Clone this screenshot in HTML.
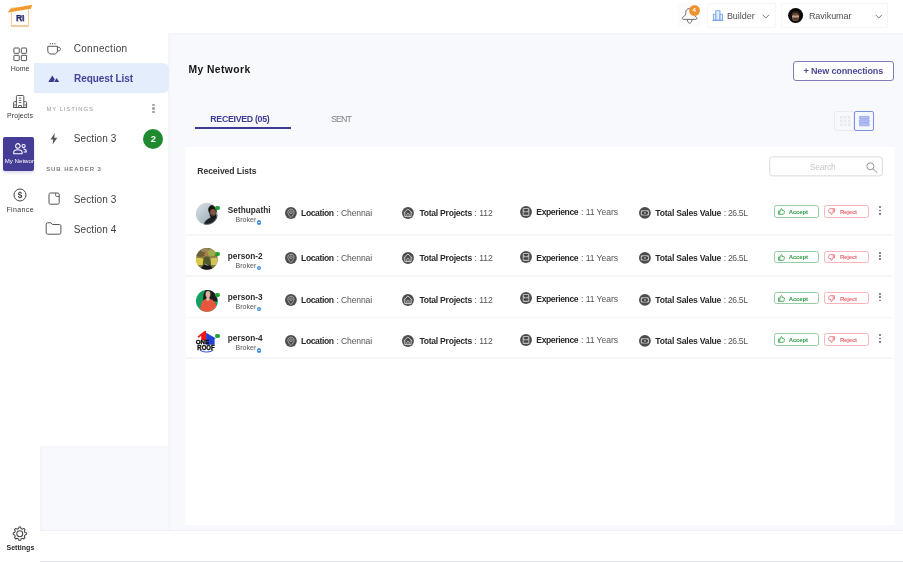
<!DOCTYPE html>
<html><head><meta charset="utf-8">
<style>
*{box-sizing:border-box;margin:0;padding:0}
html,body{width:903px;height:562px;overflow:hidden}
body{position:relative;background:#f8f9fd;font-family:"Liberation Sans",sans-serif;color:#222}
.abs{position:absolute}
svg{position:absolute;overflow:visible}
.t{position:absolute;white-space:nowrap;line-height:1}
#rail{left:0;top:0;width:40px;height:562px;background:#fff}
#top{left:40px;top:0;width:863px;height:33px;background:#fff}
#side{left:40px;top:33px;width:128px;height:413px;background:#fff}
#edge3{left:40px;top:446px;width:3px;height:84px;background:linear-gradient(90deg,#f1f3fa,#f8f9fd)}
#edge4{left:40px;top:446px;width:128px;height:1.500px;background:#f4f5fb}
#edge1{left:168px;top:33px;width:735px;height:1.5px;background:#f3f5fb}
#edge2{left:168px;top:33px;width:3px;height:497px;background:linear-gradient(90deg,#f2f4fa,#f8f9fd)}
#bottom{left:40px;top:530px;width:863px;height:32px;background:#fff;border-top:1px solid #eff1f7;border-bottom:1px solid #e6e8ee}
#card{left:186px;top:147px;width:707.5px;height:377.5px;background:#fff}
.dv{position:absolute;left:186px;width:707px;height:1.500px;background:#f5f6fa}
.dot{position:absolute;width:1.8px;height:1.8px;border-radius:50%}
</style></head><body>
<div id="wrap" style="position:absolute;left:0;top:0;width:903px;height:562px;will-change:transform"><div id="rail" class="abs"></div>
<div id="top" class="abs"></div>
<div id="edge1" class="abs"></div><div id="edge2" class="abs"></div><div id="side" class="abs"></div><div id="edge3" class="abs"></div><div id="edge4" class="abs"></div>
<div id="bottom" class="abs"></div>
<div id="card" class="abs"></div>

<!-- logo -->
<svg style="left:0;top:0" width="40" height="34" viewBox="0 0 40 34">
 <rect x="11.300" y="8" width="17.200" height="18" fill="#fffefb" stroke="#f5bf7c" stroke-width="0.800"/>
 <path d="M11.300 26H28.500" stroke="#e3ad70" stroke-width="0.900"/>
 <polygon points="7.800,12.600 10.400,8.800 32.200,4.800 30.900,8.700" fill="#f29a2e"/>
 <text x="16.800" y="22.200" font-family="Liberation Sans, sans-serif" font-size="9.800" font-weight="bold" fill="#dcdce2" textLength="8.600" lengthAdjust="spacingAndGlyphs">RI</text>
 <text x="15.900" y="21.300" font-family="Liberation Sans, sans-serif" font-size="9.800" font-weight="bold" fill="#25246b" stroke="#25246b" stroke-width="0.250" textLength="8.600" lengthAdjust="spacingAndGlyphs">RI</text>
</svg>
<!-- home -->
<svg style="left:13px;top:47px" width="15" height="15" viewBox="0 0 15 15" fill="none" stroke="#555" stroke-width="1">
 <rect x="0.900" y="1" width="5.300" height="5.300" rx="0.600"/><rect x="8.300" y="1" width="5.300" height="5.300" rx="0.600"/>
 <rect x="0.900" y="8.300" width="5.300" height="5.300" rx="0.600"/><rect x="8.300" y="8.300" width="5.300" height="5.300" rx="0.600"/>
</svg>
<!-- projects -->
<svg style="left:12px;top:94px" width="16" height="15" viewBox="0 0 16 15" fill="none" stroke="#555" stroke-width="1">
 <rect x="4.400" y="1.500" width="7.400" height="12" rx="0.900"/>
 <path d="M4.400 7.600H2.600C2 7.600 1.600 8 1.600 8.600V13.500H4.400M11.800 7.600H13.600C14.200 7.600 14.600 8 14.600 8.600V13.500H11.800M1.200 13.500H15"/>
 <path d="M6.800 4.100H9.400M6.800 6.400H9.400M6.800 8.600H9.400" stroke-width="0.900"/>
 <path d="M6.700 13.500V11.500H9.500V13.500" stroke-width="0.900"/>
 <path d="M3 10V12.200M13.200 10V12.200" stroke-width="0.800"/>
</svg>
<!-- my network -->
<div class="abs" style="left:2.500px;top:136.600px;width:31.500px;height:34.300px;background:#453c96;border-radius:2px;overflow:hidden;box-shadow:0 2px 3px rgba(69,60,150,.18)">
 <svg style="left:10.800px;top:6.400px" width="14" height="12" viewBox="0 0 14 12" fill="none" stroke="#fff" stroke-width="1.050">
  <circle cx="4.900" cy="2.900" r="2.300"/><path d="M0.700 10.800V9.400C0.700 7.600 2.400 6.700 4.900 6.700S9.100 7.600 9.100 9.400V10.800Z" stroke-linejoin="round"/>
  <circle cx="10.600" cy="3" r="1.600"/><path d="M10.400 6C12.200 6 13.200 6.900 13.200 8.200V8.900H10.700"/>
 </svg>
 <div class="t" style="left:2.300px;top:21.900px;font-size:6.100px;color:#fff;letter-spacing:0px">My Network</div>
</div>
<!-- finance -->
<svg style="left:13px;top:188px" width="14" height="14" viewBox="0 0 14 14">
 <circle cx="7" cy="7" r="6" fill="none" stroke="#444" stroke-width="1"/>
 <text x="7" y="9.900" text-anchor="middle" font-family="Liberation Sans, sans-serif" font-size="8.200" font-weight="bold" fill="#444">$</text>
</svg>
<!-- settings -->
<svg style="left:12.300px;top:525.500px" width="15.400" height="15.400" viewBox="0 0 16 16" fill="none" stroke="#444" stroke-width="1.040">
 <circle cx="8.1" cy="8" r="3.100"/>
 <path d="M6.82 2.65 L7.18 1.16 L9.02 1.16 L9.38 2.65 L10.97 3.31 L12.29 2.51 L13.59 3.81 L12.79 5.13 L13.45 6.72 L14.94 7.08 L14.94 8.92 L13.45 9.28 L12.79 10.87 L13.59 12.19 L12.29 13.49 L10.97 12.69 L9.38 13.35 L9.02 14.84 L7.18 14.84 L6.82 13.35 L5.23 12.69 L3.91 13.49 L2.61 12.19 L3.41 10.87 L2.75 9.28 L1.26 8.92 L1.26 7.08 L2.75 6.72 L3.41 5.13 L2.61 3.81 L3.91 2.51 L5.23 3.31Z" stroke-linejoin="round"/>
</svg>

<!-- side -->
<svg style="left:46.500px;top:41.500px" width="16" height="14" viewBox="0 0 16 14" fill="none" stroke="#555" stroke-width="1">
 <path d="M0.800 4.300H10.400V8.800C10.400 10.800 9 12 7.200 12H4C2.200 12 0.800 10.800 0.800 8.800Z" stroke-linejoin="round"/>
 <path d="M10.400 5.300H11.800C14 5.300 14 8.800 11.800 8.800H10.400"/>
 <path d="M3.300 1V2.400M5.600 1V2.400M7.900 1V2.400" stroke-width="0.900"/>
</svg>
<div class="abs" style="left:34px;top:63px;width:135px;height:30px;background:#e3edfb;border-radius:0 6px 6px 0"></div>
<svg style="left:48px;top:73px" width="12" height="10" viewBox="0 0 12 10" fill="#3a3a8c">
 <path d="M0.300 9.100L4.300 2.500L6.800 6.600L5.400 9.100Z"/><path d="M6.100 9.100L8.600 4.900L11.200 9.100Z"/>
</svg>
<div class="dot" style="left:152.300px;top:103.700px;width:2.300px;height:2.300px;background:#a2a2a2"></div>
<div class="dot" style="left:152.300px;top:107.300px;width:2.300px;height:2.300px;background:#a2a2a2"></div>
<div class="dot" style="left:152.300px;top:111.100px;width:2.300px;height:2.300px;background:#a2a2a2"></div>
<svg style="left:50px;top:133px" width="8" height="12" viewBox="0 0 8 12" fill="#555">
 <path d="M4.800 0L0.500 6.500H3.300L2.600 11.500L7.300 4.800H4.300Z"/>
</svg>
<div class="abs" style="left:143.400px;top:128.500px;width:20px;height:20px;border-radius:50%;background:#1f8a2f"></div>
<svg style="left:48px;top:192px" width="12" height="13" viewBox="0 0 12 13" fill="none" stroke="#555" stroke-width="1">
 <path d="M2.400 1H9.800C10.600 1 11.200 1.600 11.200 2.400V10.800C11.200 11.600 10.600 12.200 9.800 12.200H2.400C1.600 12.200 1 11.600 1 10.800V2.400C1 1.600 1.600 1 2.400 1Z" stroke-linejoin="round"/>
 <path d="M7.700 1V3.600C7.700 4.100 8.100 4.500 8.600 4.500H11.200" stroke-width="0.900"/>
</svg>
<svg style="left:45px;top:222px" width="17" height="13" viewBox="0 0 17 13" fill="none" stroke="#555" stroke-width="1">
 <path d="M1.200 2.200C1.200 1.400 1.800 0.800 2.600 0.800H6L7.500 2.500H14.500C15.300 2.500 15.900 3.100 15.900 3.900V10.800C15.900 11.600 15.300 12.200 14.500 12.200H2.600C1.800 12.200 1.200 11.600 1.200 10.800Z" stroke-linejoin="round"/>
</svg>

<!-- top -->
<div class="abs" style="left:678px;top:3.300px;width:23.200px;height:24px;background:#fbfbfc;border-radius:2px"></div>
<svg style="left:676px;top:2px" width="28" height="28" viewBox="0 0 28 28" fill="none" stroke="#666" stroke-width="0.950">
 <path d="M13.500 6.500C11 6.500 9.800 8.200 9.800 10.200C9.800 12.600 9 14 7 15.100C5.800 15.700 6 17.400 7.600 17.400H19.600C21.200 17.400 21.400 15.700 20.200 15.100C18.200 14 17.400 12.600 17.400 10.200C17.400 8.200 16 6.500 13.500 6.500Z" stroke-linejoin="round"/>
 <path d="M11.300 17.500C11.300 22.300 16 22.300 16 17.500"/>
</svg>
<div class="abs" style="left:689px;top:4.800px;width:10.800px;height:10.800px;border-radius:50%;background:radial-gradient(circle,#f0922b 0,#f0922b 62%,rgba(244,170,80,.55) 78%,rgba(250,200,120,0) 100%)"></div>
<div class="abs" style="left:707.200px;top:3.300px;width:68.500px;height:24.600px;border:1px solid #f5f6f9;border-radius:2px;background:#fff"></div>
<svg style="left:712px;top:10px" width="12" height="11" viewBox="0 0 12 11" fill="#e3edfc" stroke="#6b9bee" stroke-width="0.800">
 <rect x="3.800" y="0.800" width="4.200" height="9.400"/><rect x="1.300" y="4.200" width="2.500" height="6"/><rect x="8" y="4.200" width="2.500" height="6"/><path d="M0.300 10.300H11.500"/>
</svg>
<svg style="left:762px;top:14px" width="8" height="5" viewBox="0 0 8 5" fill="none" stroke="#666" stroke-width="0.900"><path d="M0.600 0.800L3.800 4L7 0.800"/></svg>
<div class="abs" style="left:781px;top:3.300px;width:107.300px;height:24.600px;border:1px solid #f5f6f9;border-radius:2px;background:#fff"></div>
<svg style="left:787.700px;top:8.100px" width="15.200" height="15" viewBox="0 0 15.200 15">
 <defs><clipPath id="ua"><circle cx="7.600" cy="7.500" r="7.500"/></clipPath>
 <filter id="ub" filterUnits="userSpaceOnUse" x="-2" y="-2" width="20" height="20"><feGaussianBlur stdDeviation="0.450"/></filter></defs>
 <circle cx="7.600" cy="7.500" r="7.500" fill="#0b0908"/>
 <g clip-path="url(#ua)" filter="url(#ub)">
  <ellipse cx="7.500" cy="6.800" rx="4.200" ry="3.600" fill="#35261e"/>
  <ellipse cx="7.500" cy="9.200" rx="3.600" ry="3.900" fill="#7c5a48"/>
  <ellipse cx="5.700" cy="8.300" rx="1.500" ry="1.300" fill="#c9a48c"/>
  <ellipse cx="9.500" cy="8.300" rx="1.500" ry="1.300" fill="#c9a48c"/>
  <ellipse cx="7.600" cy="8.800" rx="0.800" ry="1.100" fill="#b99078"/>
  <path d="M4.600 9.900C5.800 11 9.400 11 10.600 9.900C10.400 13.800 4.800 13.800 4.600 9.900Z" fill="#5a4034"/>
  <path d="M5.800 10.200C6.800 10.900 8.400 10.900 9.400 10.200" stroke="#2a1c16" stroke-width="0.600" fill="none"/>
  <path d="M4.300 7.200C5.200 6.700 6.200 6.700 6.900 7.100M8.300 7.100C9 6.700 10 6.700 10.900 7.200" stroke="#2a1c16" stroke-width="0.500" fill="none"/>
 </g>
</svg>
<svg style="left:874.500px;top:14px" width="8" height="5" viewBox="0 0 8 5" fill="none" stroke="#666" stroke-width="0.900"><path d="M0.600 0.800L3.800 4L7 0.800"/></svg>

<!-- main -->
<div class="abs" style="left:793px;top:60.600px;width:100.500px;height:20px;border:1px solid #7f7cbd;border-radius:3px;background:#fff"></div>
<div class="abs" style="left:195px;top:126.700px;width:96.200px;height:2.500px;background:#3f3a93"></div>
<!-- view toggle -->
<div class="abs" style="left:834.400px;top:111.400px;width:20px;height:19.400px;border:1px solid #e9ebf4;border-radius:2px 0 0 2px;background:#f8f9fd"></div>
<svg style="left:839.500px;top:116px" width="10.500" height="10" viewBox="0 0 10.500 10" fill="#e9eaef">
 <rect x="0" y="0" width="2.700" height="2.600"/><rect x="3.900" y="0" width="2.700" height="2.600"/><rect x="7.800" y="0" width="2.700" height="2.600"/>
 <rect x="0" y="3.700" width="2.700" height="2.600"/><rect x="3.900" y="3.700" width="2.700" height="2.600"/><rect x="7.800" y="3.700" width="2.700" height="2.600"/>
 <rect x="0" y="7.400" width="2.700" height="2.600"/><rect x="3.900" y="7.400" width="2.700" height="2.600"/><rect x="7.800" y="7.400" width="2.700" height="2.600"/>
</svg>
<div class="abs" style="left:854px;top:111.200px;width:19.800px;height:19.800px;border:1px solid #7d8fdd;border-radius:2px;background:#f5f7fe"></div>
<svg style="left:859px;top:116px" width="10.600" height="10.200" viewBox="0 0 10.600 10.200" fill="#b3c1f4" stroke="#8192e2" stroke-width="0.600">
 <rect x="0.400" y="0.400" width="9.800" height="2.600" rx="0.500"/><rect x="0.400" y="3.800" width="9.800" height="2.600" rx="0.500"/><rect x="0.400" y="7.200" width="9.800" height="2.600" rx="0.500"/>
</svg>
<svg style="left:0;top:0" width="903" height="562"><rect x="769.700" y="156.900" width="112.600" height="19" rx="2.500" fill="#fff" stroke="#dadada" stroke-width="1"/></svg>
<svg style="left:866.400px;top:161.800px" width="12" height="11" viewBox="0 0 12 11" fill="none" stroke="#8a8a8a" stroke-width="0.900"><circle cx="4.400" cy="4.300" r="3.500"/><path d="M7 6.800L11.300 10.600"/></svg>

<div class="dv" style="top:234.200px"></div>
<div class="dv" style="top:275.100px"></div>
<div class="dv" style="top:316.600px"></div>
<div class="dv" style="top:357.400px"></div>
<div class="abs" style="left:0;top:0.0px;width:903px;height:0">
<svg style="left:195.700px;top:203.100px" width="21.600" height="21.800" viewBox="0 0 21.600 21.800">
 <defs><clipPath id="c0"><circle cx="10.800" cy="10.900" r="10.800"/></clipPath>
 <filter id="bl" filterUnits="userSpaceOnUse" x="-3" y="-3" width="28" height="28"><feGaussianBlur stdDeviation="0.500"/></filter>
 <linearGradient id="g0" x1="0" y1="0" x2="1" y2="1"><stop offset="0" stop-color="#d9e2e8"/><stop offset="0.550" stop-color="#b1bec7"/><stop offset="1" stop-color="#8b9aa3"/></linearGradient></defs>
 <g clip-path="url(#c0)">
  <rect width="21.600" height="21.800" fill="url(#g0)"/>
  <g filter="url(#bl)">
  <path d="M7.500 22.500L8.500 19.500C10 17 12.500 15.500 14.500 14.500L22 12L23 23Z" fill="#1b2226"/>
  <ellipse cx="16.700" cy="6.800" rx="4.500" ry="4.800" fill="#171311"/>
  <ellipse cx="17" cy="9.200" rx="2.900" ry="3.300" fill="#7d5644"/>
  <path d="M13.500 10C13.500 17.500 20.600 17.500 20.600 10C19.600 12.600 15 12.800 13.500 10Z" fill="#1a1412"/>
  <path d="M15.400 12.300C16.400 12.900 17.800 12.900 18.800 12.300" stroke="#a88" stroke-width="0.400" fill="none"/>
  </g>
 </g>
 <circle cx="10.800" cy="10.900" r="10.600" fill="none" stroke="#c4cacd" stroke-width="0.400"/>
</svg>

<div class="abs" style="left:215.300px;top:206.100px;width:4.300px;height:4.300px;border-radius:50%;background:#1fa32e"></div>
<div class="abs" style="left:256.500px;top:220px;width:4.500px;height:4.500px;border-radius:50%;background:radial-gradient(circle,#cfe4fa 0,#cfe4fa 14%,#3b8fe2 34%)"></div>
<!-- location -->
<svg style="left:284.700px;top:206.800px" width="12" height="12" viewBox="0 0 12 12">
 <circle cx="5.900" cy="6" r="5.900" fill="#4c4c4c"/>
 <path d="M5.900 10.600C4.100 8.500 2.800 7 2.800 5.200C2.800 3.400 4.200 2.200 5.900 2.200S9 3.400 9 5.200C9 7 7.700 8.500 5.900 10.600Z" fill="none" stroke="#c4c4c4" stroke-width="0.750"/>
 <circle cx="5.900" cy="5.200" r="1.400" fill="none" stroke="#bdbdbd" stroke-width="0.650"/>
 <circle cx="5.900" cy="5.200" r="0.450" fill="#c4c4c4"/>
</svg>
<!-- projects -->
<svg style="left:402.100px;top:206.800px" width="12" height="12" viewBox="0 0 12 12">
 <circle cx="5.950" cy="5.950" r="5.950" fill="#4c4c4c"/>
 <path d="M1.600 6L5.950 2L10.300 6M2.800 5.200V9.600H9.100V5.200" fill="none" stroke="#d6d6d6" stroke-width="0.900" stroke-linejoin="round"/>
 <path d="M4.800 9.600V7.300C4.800 6.200 7.100 6.200 7.100 7.300V9.600" fill="none" stroke="#d6d6d6" stroke-width="0.800"/>
</svg>
<!-- experience -->
<svg style="left:520.400px;top:205.600px" width="12" height="12" viewBox="0 0 12 12">
 <circle cx="6" cy="5.950" r="5.950" fill="#4c4c4c"/>
 <rect x="2.700" y="1.900" width="6.600" height="8" rx="1.200" fill="#b9b9b9"/>
 <path d="M3.700 2.900H8.300C8.300 4.600 7 5.400 6 5.400S3.700 4.600 3.700 2.900Z" fill="#444"/>
 <rect x="3.700" y="6.300" width="4.600" height="2.400" fill="#444"/>
</svg>
<!-- sales -->
<svg style="left:639px;top:206.800px" width="12" height="12" viewBox="0 0 12 12">
 <circle cx="5.900" cy="5.900" r="5.900" fill="#4c4c4c"/>
 <rect x="1.800" y="3.300" width="8.200" height="5.300" rx="1.400" fill="#c2c2c2"/>
 <ellipse cx="5.900" cy="5.900" rx="3.100" ry="1.900" fill="#3f3f3f"/>
 <circle cx="5.900" cy="5.900" r="1.100" fill="#9a9a9a"/>
</svg>
<!-- buttons -->
<div class="abs" style="left:773.600px;top:205.400px;width:45.800px;height:12.300px;border:1px solid #97cda3;border-radius:2.500px;background:#fff"></div>
<svg style="left:778px;top:208px" width="7" height="7" viewBox="0 0 7 7" fill="none" stroke="#2f9a45" stroke-width="0.800" stroke-linejoin="round">
 <path d="M0.500 3H1.800V6.300H0.500Z"/><path d="M1.800 3.200L3.300 0.600C4.200 0.600 4.300 1.400 4 2.600H5.800C6.600 2.600 6.500 3.400 6.300 4.200L5.900 5.700C5.800 6.100 5.500 6.300 5.100 6.300H1.800"/>
</svg>
<div class="abs" style="left:824px;top:205.400px;width:44.800px;height:12.300px;border:1px solid #f7b5ba;border-radius:2.500px;background:#fff"></div>
<svg style="left:828.400px;top:208.200px" width="7" height="7" viewBox="0 0 7 7" fill="none" stroke="#ee6a72" stroke-width="0.800" stroke-linejoin="round">
 <g transform="translate(7,7) rotate(180)"><path d="M0.500 3H1.800V6.300H0.500Z"/><path d="M1.800 3.200L3.300 0.600C4.200 0.600 4.300 1.400 4 2.600H5.800C6.600 2.600 6.500 3.400 6.300 4.200L5.900 5.700C5.800 6.100 5.500 6.300 5.100 6.300H1.800"/></g>
</svg>
<div class="dot" style="left:879.300px;top:206.400px;background:#666"></div>
<div class="dot" style="left:879.300px;top:209.600px;background:#666"></div>
<div class="dot" style="left:879.300px;top:212.800px;background:#666"></div>
</div>
<div class="abs" style="left:0;top:45.5px;width:903px;height:0">
<svg style="left:195.700px;top:202.900px" width="21.800" height="21.800" viewBox="0 0 21.800 21.800">
 <defs><clipPath id="c1"><circle cx="10.900" cy="10.900" r="10.900"/></clipPath>
 <filter id="bl1" filterUnits="userSpaceOnUse" x="-4" y="-4" width="30" height="30"><feGaussianBlur stdDeviation="0.750"/></filter></defs>
 <g clip-path="url(#c1)">
  <rect x="-2" y="-2" width="26" height="26" fill="#8a7a45"/>
  <g filter="url(#bl1)">
  <rect x="-2" y="-2" width="26" height="10" fill="#7f6d46"/>
  <ellipse cx="15.500" cy="4.800" rx="5" ry="3.600" fill="#a2ab4c"/>
  <ellipse cx="4.500" cy="5.500" rx="4.500" ry="3.200" fill="#6a6238"/>
  <ellipse cx="9" cy="2" rx="4" ry="2" fill="#9a8a5a"/>
  <path d="M-2 10.500C2 9 6 10 8 11.500V19H-2Z" fill="#dccb4a"/>
  <path d="M14.500 10.500C17.500 9.300 20 9.800 24 11V17H14.500Z" fill="#d2c258"/>
  <path d="M-2 17H24V24H-2Z" fill="#7b7a3c"/>
  <ellipse cx="10.300" cy="6.400" rx="1.900" ry="2.300" fill="#ae7c4c"/>
  <path d="M6.800 17.500C6.800 11 8.300 8.600 10.500 8.600S15 11 15 17.500Z" fill="#505a2c"/>
  <path d="M4.500 23C5 18.500 7.500 16.600 10.500 16.600S16.500 18.500 17.500 23Z" fill="#19191d"/>
  <path d="M8.500 16L12.500 17.500" stroke="#c9c4b0" stroke-width="0.700"/>
  </g>
 </g>
</svg>

<div class="abs" style="left:215.300px;top:206.100px;width:4.300px;height:4.300px;border-radius:50%;background:#1fa32e"></div>
<div class="abs" style="left:256.500px;top:220px;width:4.500px;height:4.500px;border-radius:50%;background:radial-gradient(circle,#cfe4fa 0,#cfe4fa 14%,#3b8fe2 34%)"></div>
<!-- location -->
<svg style="left:284.700px;top:206.800px" width="12" height="12" viewBox="0 0 12 12">
 <circle cx="5.900" cy="6" r="5.900" fill="#4c4c4c"/>
 <path d="M5.900 10.600C4.100 8.500 2.800 7 2.800 5.200C2.800 3.400 4.200 2.200 5.900 2.200S9 3.400 9 5.200C9 7 7.700 8.500 5.900 10.600Z" fill="none" stroke="#c4c4c4" stroke-width="0.750"/>
 <circle cx="5.900" cy="5.200" r="1.400" fill="none" stroke="#bdbdbd" stroke-width="0.650"/>
 <circle cx="5.900" cy="5.200" r="0.450" fill="#c4c4c4"/>
</svg>
<!-- projects -->
<svg style="left:402.100px;top:206.800px" width="12" height="12" viewBox="0 0 12 12">
 <circle cx="5.950" cy="5.950" r="5.950" fill="#4c4c4c"/>
 <path d="M1.600 6L5.950 2L10.300 6M2.800 5.200V9.600H9.100V5.200" fill="none" stroke="#d6d6d6" stroke-width="0.900" stroke-linejoin="round"/>
 <path d="M4.800 9.600V7.300C4.800 6.200 7.100 6.200 7.100 7.300V9.600" fill="none" stroke="#d6d6d6" stroke-width="0.800"/>
</svg>
<!-- experience -->
<svg style="left:520.400px;top:205.600px" width="12" height="12" viewBox="0 0 12 12">
 <circle cx="6" cy="5.950" r="5.950" fill="#4c4c4c"/>
 <rect x="2.700" y="1.900" width="6.600" height="8" rx="1.200" fill="#b9b9b9"/>
 <path d="M3.700 2.900H8.300C8.300 4.600 7 5.400 6 5.400S3.700 4.600 3.700 2.900Z" fill="#444"/>
 <rect x="3.700" y="6.300" width="4.600" height="2.400" fill="#444"/>
</svg>
<!-- sales -->
<svg style="left:639px;top:206.800px" width="12" height="12" viewBox="0 0 12 12">
 <circle cx="5.900" cy="5.900" r="5.900" fill="#4c4c4c"/>
 <rect x="1.800" y="3.300" width="8.200" height="5.300" rx="1.400" fill="#c2c2c2"/>
 <ellipse cx="5.900" cy="5.900" rx="3.100" ry="1.900" fill="#3f3f3f"/>
 <circle cx="5.900" cy="5.900" r="1.100" fill="#9a9a9a"/>
</svg>
<!-- buttons -->
<div class="abs" style="left:773.600px;top:205.400px;width:45.800px;height:12.300px;border:1px solid #97cda3;border-radius:2.500px;background:#fff"></div>
<svg style="left:778px;top:208px" width="7" height="7" viewBox="0 0 7 7" fill="none" stroke="#2f9a45" stroke-width="0.800" stroke-linejoin="round">
 <path d="M0.500 3H1.800V6.300H0.500Z"/><path d="M1.800 3.200L3.300 0.600C4.200 0.600 4.300 1.400 4 2.600H5.800C6.600 2.600 6.500 3.400 6.300 4.200L5.900 5.700C5.800 6.100 5.500 6.300 5.100 6.300H1.800"/>
</svg>
<div class="abs" style="left:824px;top:205.400px;width:44.800px;height:12.300px;border:1px solid #f7b5ba;border-radius:2.500px;background:#fff"></div>
<svg style="left:828.400px;top:208.200px" width="7" height="7" viewBox="0 0 7 7" fill="none" stroke="#ee6a72" stroke-width="0.800" stroke-linejoin="round">
 <g transform="translate(7,7) rotate(180)"><path d="M0.500 3H1.800V6.300H0.500Z"/><path d="M1.800 3.200L3.300 0.600C4.200 0.600 4.300 1.400 4 2.600H5.800C6.600 2.600 6.500 3.400 6.300 4.200L5.900 5.700C5.800 6.100 5.500 6.300 5.100 6.300H1.800"/></g>
</svg>
<div class="dot" style="left:879.300px;top:206.400px;background:#666"></div>
<div class="dot" style="left:879.300px;top:209.600px;background:#666"></div>
<div class="dot" style="left:879.300px;top:212.800px;background:#666"></div>
</div>
<div class="abs" style="left:0;top:86.8px;width:903px;height:0">
<svg style="left:195.700px;top:203.200px" width="21.800" height="21.800" viewBox="0 0 21.800 21.800">
 <defs><clipPath id="c2"><circle cx="10.900" cy="10.900" r="10.900"/></clipPath>
 <filter id="bl2" filterUnits="userSpaceOnUse" x="-4" y="-4" width="30" height="30"><feGaussianBlur stdDeviation="0.450"/></filter></defs>
 <g clip-path="url(#c2)">
  <rect x="-2" y="-2" width="26" height="26" fill="#13a060"/>
  <g filter="url(#bl2)">
  <path d="M7.300 11C6.500 3 9 -1 13 -1S20 3 21.500 11.500Z" fill="#1a1a20"/>
  <ellipse cx="12" cy="4.300" rx="2.400" ry="3.300" fill="#dcb49c"/>
  <path d="M10.600 6.500H13.400V10H10.600Z" fill="#dcb49c"/>
  <path d="M4.200 23C4.200 14 6.200 9.800 9.800 9L11.900 11.200L14 9C18 9.800 21 13 21.500 23Z" fill="#e8573d"/>
  <path d="M9.800 9L11.900 11.400L14 9C13 8.400 10.800 8.400 9.800 9Z" fill="#e6c4b0"/>
  </g>
 </g>
</svg>

<div class="abs" style="left:215.300px;top:206.100px;width:4.300px;height:4.300px;border-radius:50%;background:#1fa32e"></div>
<div class="abs" style="left:256.500px;top:220px;width:4.500px;height:4.500px;border-radius:50%;background:radial-gradient(circle,#cfe4fa 0,#cfe4fa 14%,#3b8fe2 34%)"></div>
<!-- location -->
<svg style="left:284.700px;top:206.800px" width="12" height="12" viewBox="0 0 12 12">
 <circle cx="5.900" cy="6" r="5.900" fill="#4c4c4c"/>
 <path d="M5.900 10.600C4.100 8.500 2.800 7 2.800 5.200C2.800 3.400 4.200 2.200 5.900 2.200S9 3.400 9 5.200C9 7 7.700 8.500 5.900 10.600Z" fill="none" stroke="#c4c4c4" stroke-width="0.750"/>
 <circle cx="5.900" cy="5.200" r="1.400" fill="none" stroke="#bdbdbd" stroke-width="0.650"/>
 <circle cx="5.900" cy="5.200" r="0.450" fill="#c4c4c4"/>
</svg>
<!-- projects -->
<svg style="left:402.100px;top:206.800px" width="12" height="12" viewBox="0 0 12 12">
 <circle cx="5.950" cy="5.950" r="5.950" fill="#4c4c4c"/>
 <path d="M1.600 6L5.950 2L10.300 6M2.800 5.200V9.600H9.100V5.200" fill="none" stroke="#d6d6d6" stroke-width="0.900" stroke-linejoin="round"/>
 <path d="M4.800 9.600V7.300C4.800 6.200 7.100 6.200 7.100 7.300V9.600" fill="none" stroke="#d6d6d6" stroke-width="0.800"/>
</svg>
<!-- experience -->
<svg style="left:520.400px;top:205.600px" width="12" height="12" viewBox="0 0 12 12">
 <circle cx="6" cy="5.950" r="5.950" fill="#4c4c4c"/>
 <rect x="2.700" y="1.900" width="6.600" height="8" rx="1.200" fill="#b9b9b9"/>
 <path d="M3.700 2.900H8.300C8.300 4.600 7 5.400 6 5.400S3.700 4.600 3.700 2.900Z" fill="#444"/>
 <rect x="3.700" y="6.300" width="4.600" height="2.400" fill="#444"/>
</svg>
<!-- sales -->
<svg style="left:639px;top:206.800px" width="12" height="12" viewBox="0 0 12 12">
 <circle cx="5.900" cy="5.900" r="5.900" fill="#4c4c4c"/>
 <rect x="1.800" y="3.300" width="8.200" height="5.300" rx="1.400" fill="#c2c2c2"/>
 <ellipse cx="5.900" cy="5.900" rx="3.100" ry="1.900" fill="#3f3f3f"/>
 <circle cx="5.900" cy="5.900" r="1.100" fill="#9a9a9a"/>
</svg>
<!-- buttons -->
<div class="abs" style="left:773.600px;top:205.400px;width:45.800px;height:12.300px;border:1px solid #97cda3;border-radius:2.500px;background:#fff"></div>
<svg style="left:778px;top:208px" width="7" height="7" viewBox="0 0 7 7" fill="none" stroke="#2f9a45" stroke-width="0.800" stroke-linejoin="round">
 <path d="M0.500 3H1.800V6.300H0.500Z"/><path d="M1.800 3.200L3.300 0.600C4.200 0.600 4.300 1.400 4 2.600H5.800C6.600 2.600 6.500 3.400 6.300 4.200L5.900 5.700C5.800 6.100 5.500 6.300 5.100 6.300H1.800"/>
</svg>
<div class="abs" style="left:824px;top:205.400px;width:44.800px;height:12.300px;border:1px solid #f7b5ba;border-radius:2.500px;background:#fff"></div>
<svg style="left:828.400px;top:208.200px" width="7" height="7" viewBox="0 0 7 7" fill="none" stroke="#ee6a72" stroke-width="0.800" stroke-linejoin="round">
 <g transform="translate(7,7) rotate(180)"><path d="M0.500 3H1.800V6.300H0.500Z"/><path d="M1.800 3.200L3.300 0.600C4.200 0.600 4.300 1.400 4 2.600H5.800C6.600 2.600 6.500 3.400 6.300 4.200L5.900 5.700C5.800 6.100 5.500 6.300 5.100 6.300H1.800"/></g>
</svg>
<div class="dot" style="left:879.300px;top:206.400px;background:#666"></div>
<div class="dot" style="left:879.300px;top:209.600px;background:#666"></div>
<div class="dot" style="left:879.300px;top:212.800px;background:#666"></div>
</div>
<div class="abs" style="left:0;top:128.0px;width:903px;height:0">
<svg style="left:190px;top:197px" width="34" height="34" viewBox="0 0 34 34">
 <defs><clipPath id="c3"><circle cx="16.600" cy="16.700" r="10.900"/></clipPath></defs>
 <circle cx="16.600" cy="16.700" r="10.900" fill="#fff"/>
 <g clip-path="url(#c3)">
 <path d="M9.500 25C12.500 28 20.500 28 23.500 25" fill="none" stroke="#3a63d8" stroke-width="1.300"/>
 <polygon points="7.300,11.800 15.200,5.500 16.100,5.500 16.100,15.200 11.200,15.200 11.200,10.800 8.800,12.700" fill="#f21616"/>
 <polygon points="16.100,7.800 26.200,13.400 24.600,13.400 24.600,19.700 16.100,19.700" fill="#2141d6"/>
 </g>
 <text x="5.700" y="18.800" font-family="Liberation Sans, sans-serif" font-size="6" font-weight="bold" fill="#0a0a0a" stroke="#0a0a0a" stroke-width="0.350" textLength="13.600" lengthAdjust="spacingAndGlyphs">ONE</text>
 <text x="7.300" y="24.800" font-family="Liberation Sans, sans-serif" font-size="6.300" font-weight="bold" fill="#0a0a0a" stroke="#0a0a0a" stroke-width="0.350" textLength="17.400" lengthAdjust="spacingAndGlyphs">ROOF</text>
</svg>

<div class="abs" style="left:215.300px;top:206.100px;width:4.300px;height:4.300px;border-radius:50%;background:#1fa32e"></div>
<div class="abs" style="left:256.500px;top:220px;width:4.500px;height:4.500px;border-radius:50%;background:radial-gradient(circle,#cfe4fa 0,#cfe4fa 14%,#3b8fe2 34%)"></div>
<!-- location -->
<svg style="left:284.700px;top:206.800px" width="12" height="12" viewBox="0 0 12 12">
 <circle cx="5.900" cy="6" r="5.900" fill="#4c4c4c"/>
 <path d="M5.900 10.600C4.100 8.500 2.800 7 2.800 5.200C2.800 3.400 4.200 2.200 5.900 2.200S9 3.400 9 5.200C9 7 7.700 8.500 5.900 10.600Z" fill="none" stroke="#c4c4c4" stroke-width="0.750"/>
 <circle cx="5.900" cy="5.200" r="1.400" fill="none" stroke="#bdbdbd" stroke-width="0.650"/>
 <circle cx="5.900" cy="5.200" r="0.450" fill="#c4c4c4"/>
</svg>
<!-- projects -->
<svg style="left:402.100px;top:206.800px" width="12" height="12" viewBox="0 0 12 12">
 <circle cx="5.950" cy="5.950" r="5.950" fill="#4c4c4c"/>
 <path d="M1.600 6L5.950 2L10.300 6M2.800 5.200V9.600H9.100V5.200" fill="none" stroke="#d6d6d6" stroke-width="0.900" stroke-linejoin="round"/>
 <path d="M4.800 9.600V7.300C4.800 6.200 7.100 6.200 7.100 7.300V9.600" fill="none" stroke="#d6d6d6" stroke-width="0.800"/>
</svg>
<!-- experience -->
<svg style="left:520.400px;top:205.600px" width="12" height="12" viewBox="0 0 12 12">
 <circle cx="6" cy="5.950" r="5.950" fill="#4c4c4c"/>
 <rect x="2.700" y="1.900" width="6.600" height="8" rx="1.200" fill="#b9b9b9"/>
 <path d="M3.700 2.900H8.300C8.300 4.600 7 5.400 6 5.400S3.700 4.600 3.700 2.900Z" fill="#444"/>
 <rect x="3.700" y="6.300" width="4.600" height="2.400" fill="#444"/>
</svg>
<!-- sales -->
<svg style="left:639px;top:206.800px" width="12" height="12" viewBox="0 0 12 12">
 <circle cx="5.900" cy="5.900" r="5.900" fill="#4c4c4c"/>
 <rect x="1.800" y="3.300" width="8.200" height="5.300" rx="1.400" fill="#c2c2c2"/>
 <ellipse cx="5.900" cy="5.900" rx="3.100" ry="1.900" fill="#3f3f3f"/>
 <circle cx="5.900" cy="5.900" r="1.100" fill="#9a9a9a"/>
</svg>
<!-- buttons -->
<div class="abs" style="left:773.600px;top:205.400px;width:45.800px;height:12.300px;border:1px solid #97cda3;border-radius:2.500px;background:#fff"></div>
<svg style="left:778px;top:208px" width="7" height="7" viewBox="0 0 7 7" fill="none" stroke="#2f9a45" stroke-width="0.800" stroke-linejoin="round">
 <path d="M0.500 3H1.800V6.300H0.500Z"/><path d="M1.800 3.200L3.300 0.600C4.200 0.600 4.300 1.400 4 2.600H5.800C6.600 2.600 6.500 3.400 6.300 4.200L5.900 5.700C5.800 6.100 5.500 6.300 5.100 6.300H1.800"/>
</svg>
<div class="abs" style="left:824px;top:205.400px;width:44.800px;height:12.300px;border:1px solid #f7b5ba;border-radius:2.500px;background:#fff"></div>
<svg style="left:828.400px;top:208.200px" width="7" height="7" viewBox="0 0 7 7" fill="none" stroke="#ee6a72" stroke-width="0.800" stroke-linejoin="round">
 <g transform="translate(7,7) rotate(180)"><path d="M0.500 3H1.800V6.300H0.500Z"/><path d="M1.800 3.200L3.300 0.600C4.200 0.600 4.300 1.400 4 2.600H5.800C6.600 2.600 6.500 3.400 6.300 4.200L5.900 5.700C5.800 6.100 5.500 6.300 5.100 6.300H1.800"/></g>
</svg>
<div class="dot" style="left:879.300px;top:206.400px;background:#666"></div>
<div class="dot" style="left:879.300px;top:209.600px;background:#666"></div>
<div class="dot" style="left:879.300px;top:212.800px;background:#666"></div>
</div>

<div class="t" style="left:10.7px;top:65px;font-size:7px;font-weight:normal;color:#3a3a3a;letter-spacing:0.004px;">Home</div>
<div class="t" style="left:7.1px;top:112px;font-size:7px;font-weight:normal;color:#3a3a3a;letter-spacing:0.072px;">Projects</div>
<div class="t" style="left:6.4px;top:206px;font-size:7px;font-weight:normal;color:#3a3a3a;letter-spacing:0.382px;">Finance</div>
<div class="t" style="left:6.5px;top:544px;font-size:7px;font-weight:bold;color:#2a2a2a;letter-spacing:0.025px;">Settings</div>
<div class="t" style="left:73.7px;top:44px;font-size:10px;font-weight:normal;color:#404040;letter-spacing:0.323px;">Connection</div>
<div class="t" style="left:74.1px;top:74px;font-size:10px;font-weight:bold;color:#45429a;letter-spacing:-0.092px;">Request List</div>
<div class="t" style="left:46.5px;top:106px;font-size:6px;font-weight:normal;color:#9a9a9a;letter-spacing:0.859px;">MY LISTINGS</div>
<div class="t" style="left:73.8px;top:134px;font-size:10px;font-weight:normal;color:#404040;letter-spacing:0.100px;">Section 3</div>
<div class="t" style="left:150.7px;top:134px;font-size:9.4px;font-weight:bold;color:#fff;letter-spacing:0.000px;">2</div>
<div class="t" style="left:46.2px;top:166px;font-size:6px;font-weight:bold;color:#7d7d7d;letter-spacing:0.901px;">SUB HEADER 3</div>
<div class="t" style="left:73.8px;top:195px;font-size:10px;font-weight:normal;color:#404040;letter-spacing:0.100px;">Section 3</div>
<div class="t" style="left:73.8px;top:225px;font-size:10px;font-weight:normal;color:#404040;letter-spacing:0.100px;">Section 4</div>
<div class="t" style="left:726.9px;top:12px;font-size:9px;font-weight:normal;color:#505050;letter-spacing:-0.019px;">Builder</div>
<div class="t" style="left:808.9px;top:12px;font-size:9px;font-weight:normal;color:#505050;letter-spacing:-0.052px;">Ravikumar</div>
<div class="t" style="left:692.6px;top:7px;font-size:6px;font-weight:bold;color:#fff;letter-spacing:0.000px;">4</div>
<div class="t" style="left:188.4px;top:65px;font-size:10.3px;font-weight:bold;color:#141414;letter-spacing:0.445px;">My Network</div>
<div class="t" style="left:803.5px;top:67px;font-size:9px;font-weight:bold;color:#4d4a97;letter-spacing:-0.130px;">+ New connections</div>
<div class="t" style="left:210.3px;top:115px;font-size:8.8px;font-weight:bold;color:#3f3a93;letter-spacing:-0.305px;">RECEIVED (05)</div>
<div class="t" style="left:331.1px;top:115px;font-size:8.8px;font-weight:normal;color:#7d7d7d;letter-spacing:-0.923px;">SENT</div>
<div class="t" style="left:197.3px;top:167px;font-size:8.6px;font-weight:bold;color:#333;letter-spacing:-0.068px;">Received Lists</div>
<div class="t" style="left:809.9px;top:163px;font-size:8.4px;font-weight:normal;color:#c6c6c6;letter-spacing:-0.149px;">Search</div>
<div class="t" style="left:227.8px;top:207px;font-size:8.2px;font-weight:bold;color:#2a2a2a;letter-spacing:0.043px;">Sethupathi</div>
<div class="t" style="left:235.5px;top:216px;font-size:7px;font-weight:normal;color:#555;letter-spacing:0.035px;">Broker</div>
<div class="t" style="left:301.1px;top:209px;font-size:8.6px;font-weight:bold;color:#2a2a2a;letter-spacing:-0.416px;">Location</div>
<div class="t" style="left:336.4px;top:209px;font-size:8.6px;font-weight:normal;color:#555;letter-spacing:-0.125px;">: Chennai</div>
<div class="t" style="left:419.4px;top:209px;font-size:8.6px;font-weight:bold;color:#2a2a2a;letter-spacing:-0.262px;">Total Projects</div>
<div class="t" style="left:474.6px;top:209px;font-size:8.6px;font-weight:normal;color:#555;letter-spacing:-0.096px;">: 112</div>
<div class="t" style="left:536.3px;top:208px;font-size:8.6px;font-weight:bold;color:#2a2a2a;letter-spacing:-0.397px;">Experience</div>
<div class="t" style="left:581.0px;top:208px;font-size:8.6px;font-weight:normal;color:#555;letter-spacing:-0.066px;">: 11 Years</div>
<div class="t" style="left:655.3px;top:209px;font-size:8.6px;font-weight:bold;color:#2a2a2a;letter-spacing:-0.217px;">Total Sales Value</div>
<div class="t" style="left:723.8px;top:209px;font-size:8.6px;font-weight:normal;color:#555;letter-spacing:-0.347px;">: 26.5L</div>
<div class="t" style="left:788.8px;top:209px;font-size:6px;font-weight:bold;color:#2f9a45;letter-spacing:-0.183px;">Accept</div>
<div class="t" style="left:839.9px;top:209px;font-size:6px;font-weight:bold;color:#ee6a72;letter-spacing:-0.163px;">Reject</div>
<div class="t" style="left:227.8px;top:253px;font-size:8.2px;font-weight:bold;color:#2a2a2a;letter-spacing:0.032px;">person-2</div>
<div class="t" style="left:235.5px;top:262px;font-size:7px;font-weight:normal;color:#555;letter-spacing:0.035px;">Broker</div>
<div class="t" style="left:301.1px;top:254px;font-size:8.6px;font-weight:bold;color:#2a2a2a;letter-spacing:-0.416px;">Location</div>
<div class="t" style="left:336.4px;top:254px;font-size:8.6px;font-weight:normal;color:#555;letter-spacing:-0.125px;">: Chennai</div>
<div class="t" style="left:419.4px;top:254px;font-size:8.6px;font-weight:bold;color:#2a2a2a;letter-spacing:-0.262px;">Total Projects</div>
<div class="t" style="left:474.6px;top:254px;font-size:8.6px;font-weight:normal;color:#555;letter-spacing:-0.096px;">: 112</div>
<div class="t" style="left:536.3px;top:254px;font-size:8.6px;font-weight:bold;color:#2a2a2a;letter-spacing:-0.397px;">Experience</div>
<div class="t" style="left:581.0px;top:254px;font-size:8.6px;font-weight:normal;color:#555;letter-spacing:-0.066px;">: 11 Years</div>
<div class="t" style="left:655.3px;top:254px;font-size:8.6px;font-weight:bold;color:#2a2a2a;letter-spacing:-0.217px;">Total Sales Value</div>
<div class="t" style="left:723.8px;top:254px;font-size:8.6px;font-weight:normal;color:#555;letter-spacing:-0.347px;">: 26.5L</div>
<div class="t" style="left:788.8px;top:254px;font-size:6px;font-weight:bold;color:#2f9a45;letter-spacing:-0.183px;">Accept</div>
<div class="t" style="left:839.9px;top:254px;font-size:6px;font-weight:bold;color:#ee6a72;letter-spacing:-0.163px;">Reject</div>
<div class="t" style="left:227.8px;top:294px;font-size:8.2px;font-weight:bold;color:#2a2a2a;letter-spacing:0.032px;">person-3</div>
<div class="t" style="left:235.5px;top:303px;font-size:7px;font-weight:normal;color:#555;letter-spacing:0.035px;">Broker</div>
<div class="t" style="left:301.1px;top:296px;font-size:8.6px;font-weight:bold;color:#2a2a2a;letter-spacing:-0.416px;">Location</div>
<div class="t" style="left:336.4px;top:296px;font-size:8.6px;font-weight:normal;color:#555;letter-spacing:-0.125px;">: Chennai</div>
<div class="t" style="left:419.4px;top:296px;font-size:8.6px;font-weight:bold;color:#2a2a2a;letter-spacing:-0.262px;">Total Projects</div>
<div class="t" style="left:474.6px;top:296px;font-size:8.6px;font-weight:normal;color:#555;letter-spacing:-0.096px;">: 112</div>
<div class="t" style="left:536.3px;top:295px;font-size:8.6px;font-weight:bold;color:#2a2a2a;letter-spacing:-0.397px;">Experience</div>
<div class="t" style="left:581.0px;top:295px;font-size:8.6px;font-weight:normal;color:#555;letter-spacing:-0.066px;">: 11 Years</div>
<div class="t" style="left:655.3px;top:296px;font-size:8.6px;font-weight:bold;color:#2a2a2a;letter-spacing:-0.217px;">Total Sales Value</div>
<div class="t" style="left:723.8px;top:296px;font-size:8.6px;font-weight:normal;color:#555;letter-spacing:-0.347px;">: 26.5L</div>
<div class="t" style="left:788.8px;top:296px;font-size:6px;font-weight:bold;color:#2f9a45;letter-spacing:-0.183px;">Accept</div>
<div class="t" style="left:839.9px;top:296px;font-size:6px;font-weight:bold;color:#ee6a72;letter-spacing:-0.163px;">Reject</div>
<div class="t" style="left:227.8px;top:335px;font-size:8.2px;font-weight:bold;color:#2a2a2a;letter-spacing:0.032px;">person-4</div>
<div class="t" style="left:235.5px;top:344px;font-size:7px;font-weight:normal;color:#555;letter-spacing:0.035px;">Broker</div>
<div class="t" style="left:301.1px;top:337px;font-size:8.6px;font-weight:bold;color:#2a2a2a;letter-spacing:-0.416px;">Location</div>
<div class="t" style="left:336.4px;top:337px;font-size:8.6px;font-weight:normal;color:#555;letter-spacing:-0.125px;">: Chennai</div>
<div class="t" style="left:419.4px;top:337px;font-size:8.6px;font-weight:bold;color:#2a2a2a;letter-spacing:-0.262px;">Total Projects</div>
<div class="t" style="left:474.6px;top:337px;font-size:8.6px;font-weight:normal;color:#555;letter-spacing:-0.096px;">: 112</div>
<div class="t" style="left:536.3px;top:336px;font-size:8.6px;font-weight:bold;color:#2a2a2a;letter-spacing:-0.397px;">Experience</div>
<div class="t" style="left:581.0px;top:336px;font-size:8.6px;font-weight:normal;color:#555;letter-spacing:-0.066px;">: 11 Years</div>
<div class="t" style="left:655.3px;top:337px;font-size:8.6px;font-weight:bold;color:#2a2a2a;letter-spacing:-0.217px;">Total Sales Value</div>
<div class="t" style="left:723.8px;top:337px;font-size:8.6px;font-weight:normal;color:#555;letter-spacing:-0.347px;">: 26.5L</div>
<div class="t" style="left:788.8px;top:337px;font-size:6px;font-weight:bold;color:#2f9a45;letter-spacing:-0.183px;">Accept</div>
<div class="t" style="left:839.9px;top:337px;font-size:6px;font-weight:bold;color:#ee6a72;letter-spacing:-0.163px;">Reject</div>
</div></body></html>
